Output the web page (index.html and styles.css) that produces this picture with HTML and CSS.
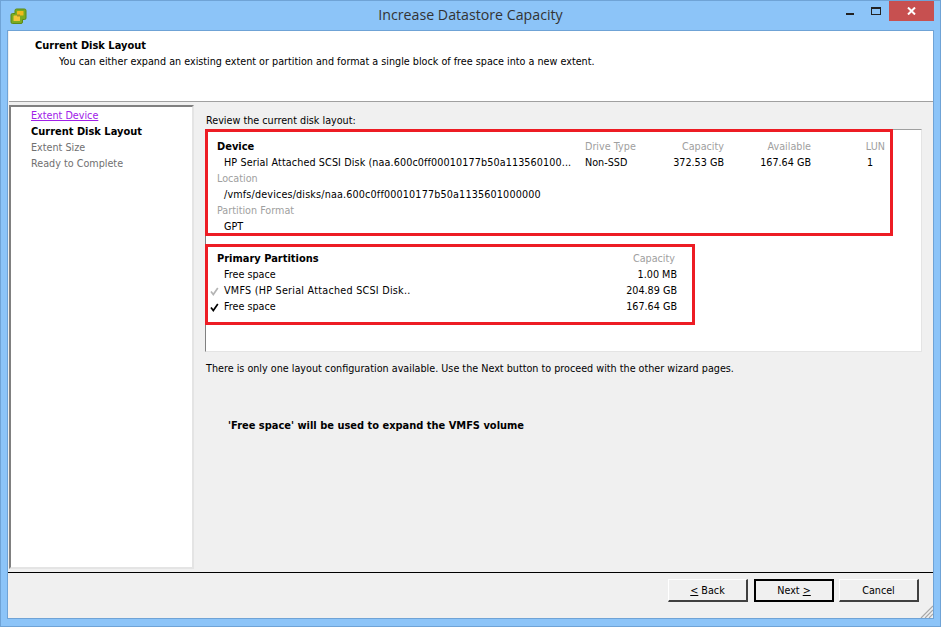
FILE: index.html
```html
<!DOCTYPE html>
<html lang="en">
<head>
<meta charset="utf-8">
<title>Increase Datastore Capacity</title>
<link rel="stylesheet" href="styles.css">
</head>
<body>
<div class="window">
  <header class="titlebar">
    <svg class="app-icon" width="17" height="17" viewBox="0 0 17 17">
      <path d="M6.500 1h8a1.500 1.500 0 0 1 1.500 1.500V10a1.500 1.500 0 0 1-1.500 1.500H12.500V14a1.500 1.500 0 0 1-1.500 1.500H2.500A1.500 1.500 0 0 1 1 14V7a1.500 1.500 0 0 1 1.500-1.500H5V2.500A1.500 1.500 0 0 1 6.500 1z" fill="#7aab23" stroke="#5c8a14" stroke-width="1"/>
      <rect x="7" y="3" width="6.500" height="4.500" rx=".5" fill="#f0b91e"/>
      <rect x="3.500" y="7.500" width="6.500" height="5.500" rx=".5" fill="#f4c63a"/>
      <rect x="7" y="6.500" width="3" height="2" fill="#a98f22"/>
    </svg>
    <h1 class="title">Increase Datastore Capacity</h1>
    <div class="caption">
      <span class="cap-btn"><span class="min-glyph"></span></span>
      <span class="cap-btn"><span class="max-glyph"></span></span>
      <span class="cap-close"><svg width="9" height="8" viewBox="0 0 9 8"><path d="M1 .5l7 7M8 .5l-7 7" stroke="#fff" stroke-width="2"/></svg></span>
    </div>
  </header>
  <main class="client">
    <section class="banner">
      <div class="banner-title">Current Disk Layout</div>
      <div class="banner-sub">You can either expand an existing extent or partition and format a single block of free space into a new extent.</div>
    </section>
    <div class="middle">
      <nav class="steps">
        <a class="step-link">Extent Device</a>
        <div class="step-current">Current Disk Layout</div>
        <div class="step-muted">Extent Size</div>
        <div class="step-muted">Ready to Complete</div>
      </nav>
      <div class="content">
        <div class="review">Review the current disk layout:</div>
        <div class="panel">
          <section class="device">
            <div class="strong">Device</div>
            <div class="muted">Drive Type</div>
            <div class="muted right">Capacity</div>
            <div class="muted right">Available</div>
            <div class="muted right">LUN</div>
            <div class="indent track-s">HP Serial Attached SCSI Disk (naa.600c0ff00010177b50a113560100...</div>
            <div>Non-SSD</div>
            <div class="right">372.53 GB</div>
            <div class="right">167.64 GB</div>
            <div class="right lun">1</div>
            <div class="muted full">Location</div>
            <div class="indent full track-m">/vmfs/devices/disks/naa.600c0ff00010177b50a1135601000000</div>
            <div class="muted full">Partition Format</div>
            <div class="indent full">GPT</div>
          </section>
          <section class="partitions">
            <div class="strong">Primary Partitions</div>
            <div class="muted right head-cap">Capacity</div>
            <div class="indent">Free space</div>
            <div class="right">1.00 MB</div>
            <div class="indent check-row track-l"><svg class="check" width="9" height="9" viewBox="0 0 9 9"><path d="M1 4.500l2.300 3L7.800 1" fill="none" stroke="#b4b4b4" stroke-width="1.700"/></svg>VMFS (HP Serial Attached SCSI Disk..</div>
            <div class="right">204.89 GB</div>
            <div class="indent check-row"><svg class="check" width="9" height="9" viewBox="0 0 9 9"><path d="M1 4.500l2.300 3L7.800 1" fill="none" stroke="#000" stroke-width="1.700"/></svg>Free space</div>
            <div class="right">167.64 GB</div>
          </section>
        </div>
        <p class="note">There is only one layout configuration available. Use the Next button to proceed with the other wizard pages.</p>
        <p class="expand">'Free space' will be used to expand the VMFS volume</p>
      </div>
    </div>
    <footer class="footer">
      <button class="btn"><u>&lt;</u> Back</button>
      <button class="btn btn-default">Next <u>&gt;</u></button>
      <button class="btn">Cancel</button>
      <svg class="grip" width="13" height="13" viewBox="0 0 13 13"><path d="M13 1L1 13M13 5L5 13M13 9L9 13" stroke="#a8a8a8" stroke-width="1.200"/></svg>
    </footer>
  </main>
</div>
</body>
</html>
```
FILE: styles.css
```css
* { box-sizing: border-box; }
html, body { margin: 0; padding: 0; }
body { font: 9.65px/16px "DejaVu Sans", sans-serif; color: #000; }
.window {
  width: 941px; height: 627px;
  background: #8cc4f8;
  border: 1px solid #6fa3d6;
  padding: 0 6px 7px 6px;
  display: flex; flex-direction: column;
  overflow: hidden;
}
.titlebar { height: 29px; flex: none; display: flex; position: relative; }
.app-icon { margin: 7px 0 0 3px; }
.title {
  position: absolute; left: 0; right: 0; top: 4px; margin: 0;
  text-align: center;
  font: 400 14.2px/20px "Open Sans", sans-serif;
  color: #333;
}
.caption { margin-left: auto; display: flex; height: 20px; }
.cap-btn { width: 26px; display: flex; justify-content: center; }
.cap-close { width: 45px; background: #c75050; display: flex; align-items: center; justify-content: center; }
.min-glyph { width: 8px; height: 2px; background: #222; margin-top: 12px; }
.max-glyph { width: 10px; height: 8px; border: 1px solid #222; border-top-width: 2px; margin-top: 6px; }
.client {
  flex: 1; min-height: 0;
  border: 1px solid #6fa3d6;
  background: #f0f0f0;
  display: flex; flex-direction: column;
}
.banner {
  height: 71px; flex: none;
  background: #fff;
  border-bottom: 1px solid #a0a0a0;
  margin-left: 1px;
  padding: 7px 0 0 26px;
}
.banner-title, .strong, .step-current, .expand { font-weight: 700; font-size: 9.9px; }
.banner-sub { padding-left: 24px; }
.middle { height: 470px; flex: none; display: flex; padding: 3px 0 0 1px; }
.steps {
  width: 185px; height: 464px; flex: none;
  background: #fff;
  border-style: solid;
  border-color: #808080 #e4e4e4 #e4e4e4 #808080;
  border-width: 2px;
  padding: 1px 0 0 20px;
}
.step-link { display: block; color: #a020e8; text-decoration: underline; }
.step-muted { color: #707070; }
.content { flex: 1; padding: 8px 0 0 11px; }
.review { padding-left: 1px; height: 15px; }
.panel {
  width: 717px; height: 223px;
  background: #fff;
  border-style: solid;
  border-color: #a0a0a0 #e4e4e4 #e4e4e4 #808080;
  border-width: 1px;
  margin-top: 1px;
}
.device, .partitions {
  border: 3px solid #ed1c24;
  margin: -1px 0 0 -1px;
  padding: 7px 0 0 9px;
  display: grid;
  grid-auto-rows: 16px;
}
.device {
  width: 688px; height: 107px;
  grid-template-columns: 368px 80px 59px 87px 74px;
}
.partitions {
  width: 490px; height: 81px;
  margin-top: 8px;
  grid-template-columns: 1fr 74px;
  padding: 4px 15px 0 9px;
}
.indent { padding-left: 7px; white-space: nowrap; }
.track-s { letter-spacing: .11px; }
.track-m { letter-spacing: .16px; }
.track-l { letter-spacing: .25px; }
.full { grid-column: 1 / -1; }
.muted { color: #a0a0a0; }
.right { text-align: right; white-space: nowrap; }
.lun { padding-right: 12px; }
.head-cap { padding-right: 2px; }
.check-row { position: relative; }
.check { position: absolute; left: -7px; top: 4px; }
.note { margin: 9px 0 0 1px; }
.expand { margin: 41px 0 0 23px; }
.footer {
  flex: 1;
  border-top: 1px solid #000;
  display: flex; justify-content: flex-end; gap: 5px;
  padding: 6px 14px 0 0;
  position: relative;
}
.btn {
  width: 80px; height: 23px;
  font: inherit; color: #000;
  background: #f0f0f0;
  border-style: solid;
  border-width: 1px 2px 2px 1px;
  border-color: #fff #404040 #404040 #fff;
  padding: 1px 0 0;
}
.btn-default { border: 2px solid #000; margin-left: 1px; }
.grip { position: absolute; right: 0; bottom: 0; }
```
